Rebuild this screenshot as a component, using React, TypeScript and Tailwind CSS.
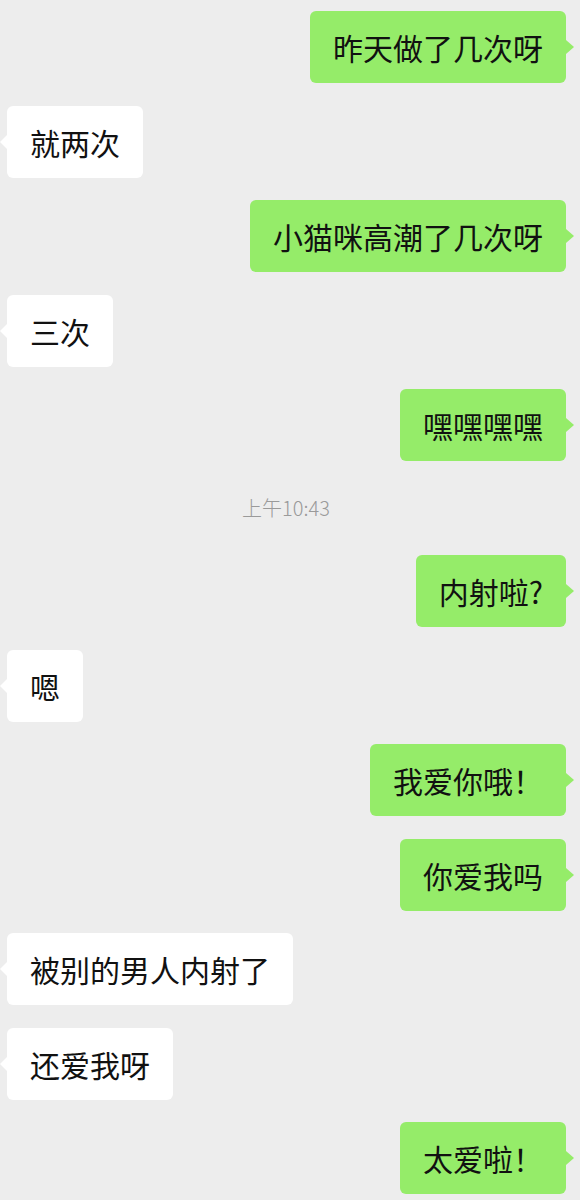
import React from 'react';

type Msg = { side: 'left' | 'right'; text: string } | { side: 'time'; text: string };

const messages: Msg[] = [
  { side: 'right', text: '昨天做了几次呀' },
  { side: 'left', text: '就两次' },
  { side: 'right', text: '小猫咪高潮了几次呀' },
  { side: 'left', text: '三次' },
  { side: 'right', text: '嘿嘿嘿嘿' },
  { side: 'time', text: '上午10:43' },
  { side: 'right', text: '内射啦?' },
  { side: 'left', text: '嗯' },
  { side: 'right', text: '我爱你哦！' },
  { side: 'right', text: '你爱我吗' },
  { side: 'left', text: '被别的男人内射了' },
  { side: 'left', text: '还爱我呀' },
  { side: 'right', text: '太爱啦！' },
];

const Bubble: React.FC<{ side: 'left' | 'right'; text: string }> = ({ side, text }) => {
  const mine = side === 'right';
  return (
    <div className={mine ? 'flex justify-end pr-[14px]' : 'flex justify-start pl-[7px]'}>
      <div
        className={
          'relative rounded-[6px] px-[23px] py-[18px] text-[30px] leading-[36px] text-[#111111] whitespace-nowrap ' +
          (mine ? 'bg-[#95ec69]' : 'bg-white')
        }
      >
        {text}
        {mine ? (
          <span className="absolute top-1/2 -translate-y-1/2 right-[-8px] w-0 h-0 border-y-[7px] border-y-transparent border-l-[8px] border-l-[#95ec69]" />
        ) : (
          <span className="absolute top-1/2 -translate-y-1/2 left-[-7px] w-0 h-0 border-y-[7px] border-y-transparent border-r-[7px] border-r-white" />
        )}
      </div>
    </div>
  );
};

export default function App() {
  return (
    <div
      className="min-h-screen w-[580px] bg-[#ededed] pt-[11px] pb-[6px] flex flex-col gap-[22.5px]"
      style={{ fontFamily: '"Noto Sans CJK SC", "Noto Sans", sans-serif' }}
    >
      {messages.map((m, i) =>
        m.side === 'time' ? (
          <div key={i} className="h-[49px] flex items-center justify-center pr-[8px] text-[20px] font-light text-[#9a9a9a]">
            {m.text}
          </div>
        ) : (
          <Bubble key={i} side={m.side} text={m.text} />
        )
      )}
    </div>
  );
}
